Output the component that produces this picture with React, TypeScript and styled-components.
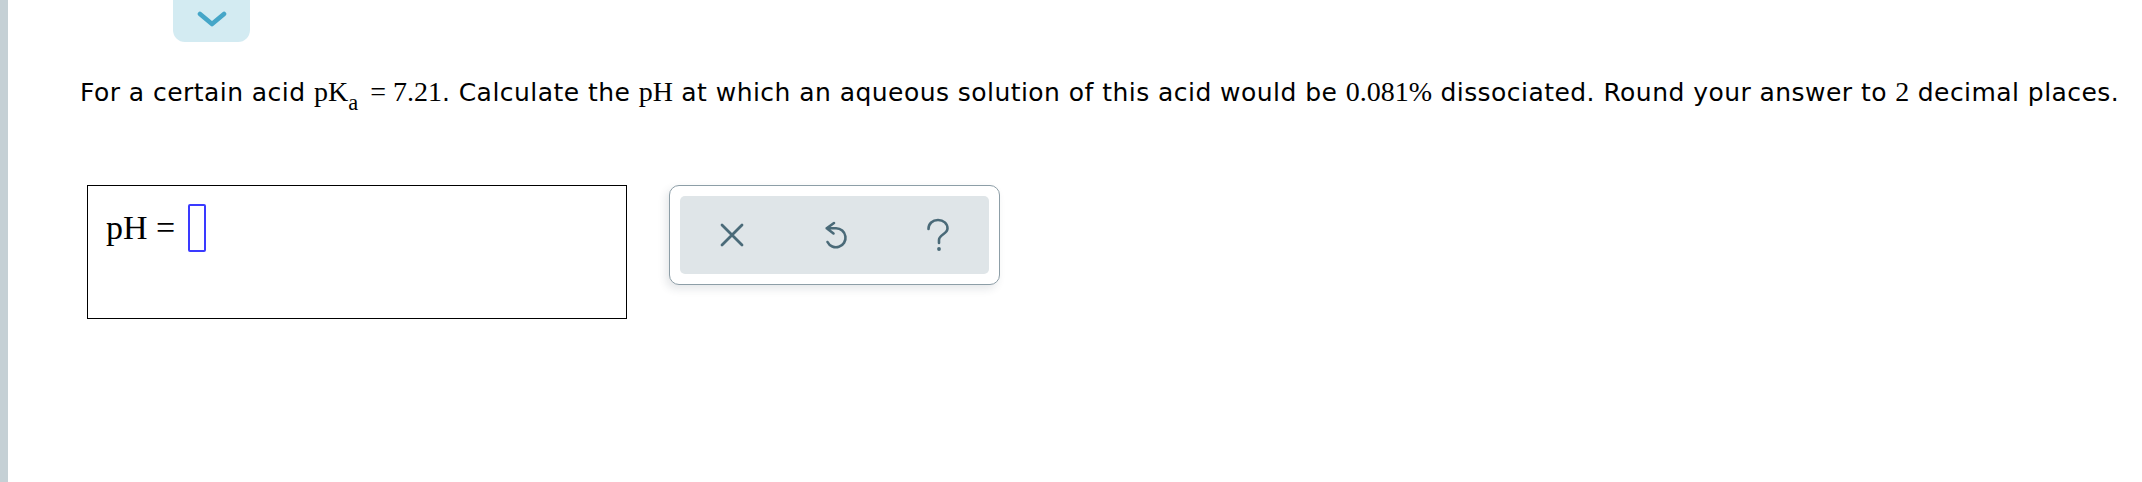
import styled, { createGlobalStyle } from "styled-components";

const GlobalStyle = createGlobalStyle`
  html, body {
    margin: 0;
    padding: 0;
    background: #fff;
  }
`;

const App = () => {
  return (
    <Page>
      <GlobalStyle />
      <SideBar />
      <Main>
        <CollapseTab type="button" aria-label="collapse">
          <svg width="30" height="16" viewBox="0 0 30 16">
            <path
              d="M3 3 L15 13 L27 3"
              fill="none"
              stroke="#45a6c8"
              strokeWidth="4.6"
              strokeLinecap="round"
              strokeLinejoin="round"
            />
          </svg>
        </CollapseTab>

        <Question>
          For a certain acid{" "}
          <Math>
            pK<Sub>a</Sub> = 7.21
          </Math>
          . Calculate the <Math>pH</Math> at which an aqueous solution of this
          acid would be <Math>0.081%</Math> dissociated. Round your answer to{" "}
          <Math>2</Math> decimal places.
        </Question>

        <AnswerRow>
          <AnswerBox>
            <Equation>
              pH =<InputSlot />
            </Equation>
          </AnswerBox>

          <ToolPanel>
            <ToolBar>
              <ToolButton type="button" aria-label="clear">
                <svg width="24" height="24" viewBox="0 0 24 24">
                  <path
                    d="M2 2 L22 22 M22 2 L2 22"
                    fill="none"
                    stroke="#4a6a78"
                    strokeWidth="2.8"
                    strokeLinecap="round"
                  />
                </svg>
              </ToolButton>
              <ToolButton type="button" aria-label="undo">
                <svg width="40" height="40" viewBox="0 0 40 40">
                  <path
                    d="M19 8 L11.7 13.3 L18.5 18.5 M11.7 13.3 H21 A9.5 9.5 0 1 1 12.5 27"
                    fill="none"
                    stroke="#4a6a78"
                    strokeWidth="2.6"
                    strokeLinecap="round"
                    strokeLinejoin="round"
                  />
                </svg>
              </ToolButton>
              <ToolButton type="button" aria-label="help">
                <svg width="24" height="36" viewBox="0 0 24 36">
                  <path
                    d="M2.5 12 C2.5 6.5 6.5 3 12 3 C17.5 3 21.5 6.5 21.5 11.5 C21.5 17 13 17.5 13 23 V26"
                    fill="none"
                    stroke="#4a6a78"
                    strokeWidth="2.6"
                    strokeLinecap="round"
                  />
                  <circle cx="13" cy="32" r="1.9" fill="#4a6a78" />
                </svg>
              </ToolButton>
            </ToolBar>
          </ToolPanel>
        </AnswerRow>
      </Main>
    </Page>
  );
};

const Page = styled.div`
  display: flex;
  min-height: 482px;
`;

const SideBar = styled.div`
  width: 8px;
  flex: none;
  background: #c5d0d5;
`;

const Main = styled.div`
  flex: 1;
  padding-left: 72px;
`;

const CollapseTab = styled.button`
  display: flex;
  align-items: center;
  justify-content: center;
  width: 77px;
  height: 42px;
  margin-left: 93px;
  padding: 0 0 4px;
  border: none;
  border-radius: 0 0 12px 12px;
  background: #d3ebf2;
  cursor: pointer;
`;

const Question = styled.p`
  margin: 34px 0 0;
  font-family: "DejaVu Sans", Verdana, sans-serif;
  font-size: 25px;
  letter-spacing: 0.45px;
  line-height: 32px;
  color: #000;
  white-space: nowrap;
`;

const Math = styled.span`
  font-family: "Liberation Serif", "Times New Roman", serif;
  font-size: 28px;
  letter-spacing: 0;
`;

const Sub = styled.span`
  font-size: 0.8em;
  line-height: 0;
  vertical-align: -0.4em;
  margin-right: 5px;
`;

const AnswerRow = styled.div`
  display: flex;
  align-items: flex-start;
  gap: 42px;
  margin: 76px 0 0 7px;
`;

const AnswerBox = styled.div`
  box-sizing: border-box;
  width: 540px;
  height: 134px;
  padding: 18px 18px;
  border: 1px solid #000;
`;

const Equation = styled.div`
  display: flex;
  align-items: center;
  font-family: "Liberation Serif", "Times New Roman", serif;
  font-size: 34px;
  line-height: 48px;
  color: #000;
  white-space: pre;
`;

const InputSlot = styled.span`
  box-sizing: border-box;
  width: 18px;
  height: 48px;
  margin-left: 13px;
  border: 2px solid #3a3aff;
  border-radius: 2px;
`;

const ToolPanel = styled.div`
  box-sizing: border-box;
  width: 331px;
  height: 100px;
  padding: 10px;
  border: 1px solid #8d9ea7;
  border-radius: 10px;
  background: #fff;
  box-shadow: -3px 4px 9px rgba(40, 60, 70, 0.12);
`;

const ToolBar = styled.div`
  display: grid;
  grid-template-columns: repeat(3, 1fr);
  height: 100%;
  border-radius: 5px;
  background: #dfe5e8;
`;

const ToolButton = styled.button`
  display: flex;
  align-items: center;
  justify-content: center;
  padding: 0;
  border: none;
  background: transparent;
  cursor: pointer;
`;

export default App;
